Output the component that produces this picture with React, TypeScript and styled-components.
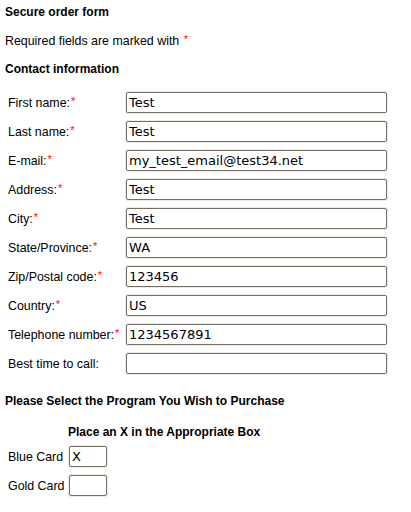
import React from "react";
import styled, { createGlobalStyle } from "styled-components";

const Global = createGlobalStyle`
  html, body { margin: 0; padding: 0; background: #fff; }
  body { font-family: "Liberation Sans", Arial, sans-serif; font-size: 12.4px; color: #000; }
`;

const Page = styled.div`
  padding: 5px 5px 0 5px;
  width: 401px;
  box-sizing: border-box;
`;

const Heading = styled.div<{ $indent?: number; $top: number }>`
  font-weight: bold;
  font-size: 12px;
  line-height: 14px;
  margin-top: ${(p) => p.$top}px;
  padding-left: ${(p) => p.$indent ?? 0}px;
`;

const Para = styled.div`
  margin-top: 15px;
  line-height: 14px;
`;

const Req = styled.span`
  color: #f00;
  font-size: 11px;
  line-height: 10px;
  vertical-align: top;
  margin-left: 1px;
`;

const FormGrid = styled.div`
  display: grid;
  grid-template-columns: 117px 263px;
  row-gap: 6px;
  margin-top: 15px;
  padding-left: 3px;
  align-items: center;
`;

const Label = styled.label`
  line-height: 14px;
`;

const Input = styled.input<{ $w?: number }>`
  box-sizing: border-box;
  width: ${(p) => (p.$w ? `${p.$w}px` : "261px")};
  height: 21px;
  margin: 1px;
  border: 1px solid #786d62;
  border-radius: 2px;
  box-shadow: 0 0 0 1px #eeebe5;
  padding: 0 3px 0 2px;
  font-family: "DejaVu Sans", sans-serif;
  font-size: 13px;
  color: #000;
  background: #fff;
  outline: none;
`;

const CardGrid = styled.div`
  display: grid;
  grid-template-columns: 60px auto;
  row-gap: 6px;
  margin-top: 6px;
  padding-left: 3px;
  align-items: center;
  justify-content: start;
`;

const fields: [string, string, boolean][] = [
  ["First name:", "Test", true],
  ["Last name:", "Test", true],
  ["E-mail:", "my_test_email@test34.net", true],
  ["Address:", "Test", true],
  ["City:", "Test", true],
  ["State/Province:", "WA", true],
  ["Zip/Postal code:", "123456", true],
  ["Country:", "US", true],
  ["Telephone number:", "1234567891", true],
  ["Best time to call:", "", false],
];

export default function App() {
  return (
    <Page>
      <Global />
      <Heading $top={0}>Secure order form</Heading>
      <Para>
        Required fields are marked with <Req>*</Req>
      </Para>
      <Heading $top={14}>Contact information</Heading>
      <FormGrid>
        {fields.map(([label, value, req]) => (
          <React.Fragment key={label}>
            <Label>
              {label}
              {req && <Req>*</Req>}
            </Label>
            <Input defaultValue={value} />
          </React.Fragment>
        ))}
      </FormGrid>
      <Heading $top={19}>Please Select the Program You Wish to Purchase</Heading>
      <Heading $top={17} $indent={63}>
        Place an X in the Appropriate Box
      </Heading>
      <CardGrid>
        <Label>Blue Card</Label>
        <Input $w={38} defaultValue="X" />
        <Label>Gold Card</Label>
        <Input $w={38} defaultValue="" />
      </CardGrid>
    </Page>
  );
}
